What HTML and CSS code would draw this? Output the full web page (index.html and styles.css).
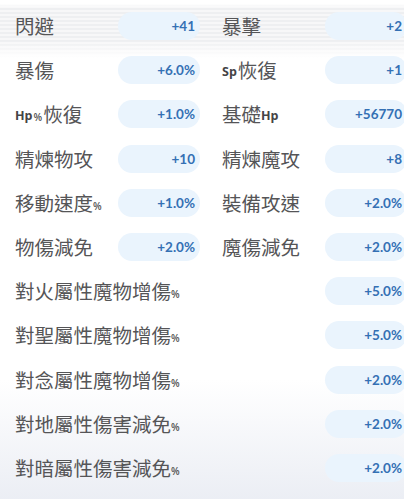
FILE: index.html
```html
<!DOCTYPE html>
<html lang="zh-Hant">
<head>
<meta charset="utf-8">
<link rel="stylesheet" href="styles.css">
</head>
<body>
<div class="panel">
  <div class="stats">
    <div class="label">閃避</div><div class="pill">+41</div>
    <div class="label r">暴擊</div><div class="pill">+2</div>

    <div class="label">暴傷</div><div class="pill">+6.0%</div>
    <div class="label r"><span class="en">Sp</span>恢復</div><div class="pill">+1</div>

    <div class="label"><span class="en">Hp</span><span class="pct">%</span>恢復</div><div class="pill">+1.0%</div>
    <div class="label r">基礎<span class="en">Hp</span></div><div class="pill">+56770</div>

    <div class="label">精煉物攻</div><div class="pill">+10</div>
    <div class="label r">精煉魔攻</div><div class="pill">+8</div>

    <div class="label">移動速度<span class="pct">%</span></div><div class="pill">+1.0%</div>
    <div class="label r">裝備攻速</div><div class="pill">+2.0%</div>

    <div class="label">物傷減免</div><div class="pill">+2.0%</div>
    <div class="label r">魔傷減免</div><div class="pill">+2.0%</div>

    <div class="label wide">對火屬性魔物增傷<span class="pct">%</span></div><div class="pill">+5.0%</div>
    <div class="label wide">對聖屬性魔物增傷<span class="pct">%</span></div><div class="pill">+5.0%</div>
    <div class="label wide">對念屬性魔物增傷<span class="pct">%</span></div><div class="pill">+2.0%</div>
    <div class="label wide">對地屬性傷害減免<span class="pct">%</span></div><div class="pill">+2.0%</div>
    <div class="label wide">對暗屬性傷害減免<span class="pct">%</span></div><div class="pill">+2.0%</div>
  </div>
</div>
</body>
</html>
```

FILE: styles.css
```css
html, body {
  margin: 0;
  padding: 0;
}
body {
  width: 404px;
  height: 499px;
  overflow: hidden;
  background: #ffffff;
}
.panel {
  width: 404px;
  height: 499px;
  box-sizing: border-box;
  padding: 12px 0 0 15px;
  overflow: hidden;
  background:
    linear-gradient(to bottom, rgba(255,255,255,0) 0px, rgba(255,255,255,0) 380px, rgba(233,236,243,0.9) 499px),
    linear-gradient(to bottom, #ffffff 0px, #ffffff 4px, rgba(255,255,255,0) 8px, rgba(255,255,255,0) 40px, #ffffff 58px),
    repeating-linear-gradient(to bottom, #eeeff1 0px, #eeeff1 2px, #f7f7f8 2px, #f7f7f8 4px);
}
.stats {
  display: grid;
  grid-template-columns: 103px 82px 125px 82px;
  column-gap: 0;
  row-gap: 16.2px;
  grid-auto-rows: 28px;
  align-items: center;
}
.label {
  font-family: "Noto Sans CJK TC", "Noto Sans", sans-serif;
  font-size: 19.5px;
  color: #555557;
  white-space: nowrap;
  line-height: 28px;
  display: flex;
  align-items: center;
}
.label.r {
  padding-left: 22px;
}
.label.wide {
  grid-column: 1 / 4;
}
.en {
  font-family: "Open Sans", "Noto Sans", sans-serif;
  font-weight: 700;
  font-size: 12.5px;
  color: #444446;
  margin-top: 3px;
  margin-right: 1px;
}
.pct {
  font-family: "Open Sans", sans-serif;
  font-weight: 600;
  font-size: 10px;
  color: #555;
  margin-top: 6px;
  margin-right: 1px;
}
.pill {
  height: 28px;
  border-radius: 14px;
  background: #eaf4fd;
  box-sizing: border-box;
  padding-right: 5px;
  display: flex;
  align-items: center;
  justify-content: flex-end;
  font-family: "Lato", "Open Sans", sans-serif;
  font-weight: 700;
  font-size: 13.5px;
  color: #3470b4;
}
```
